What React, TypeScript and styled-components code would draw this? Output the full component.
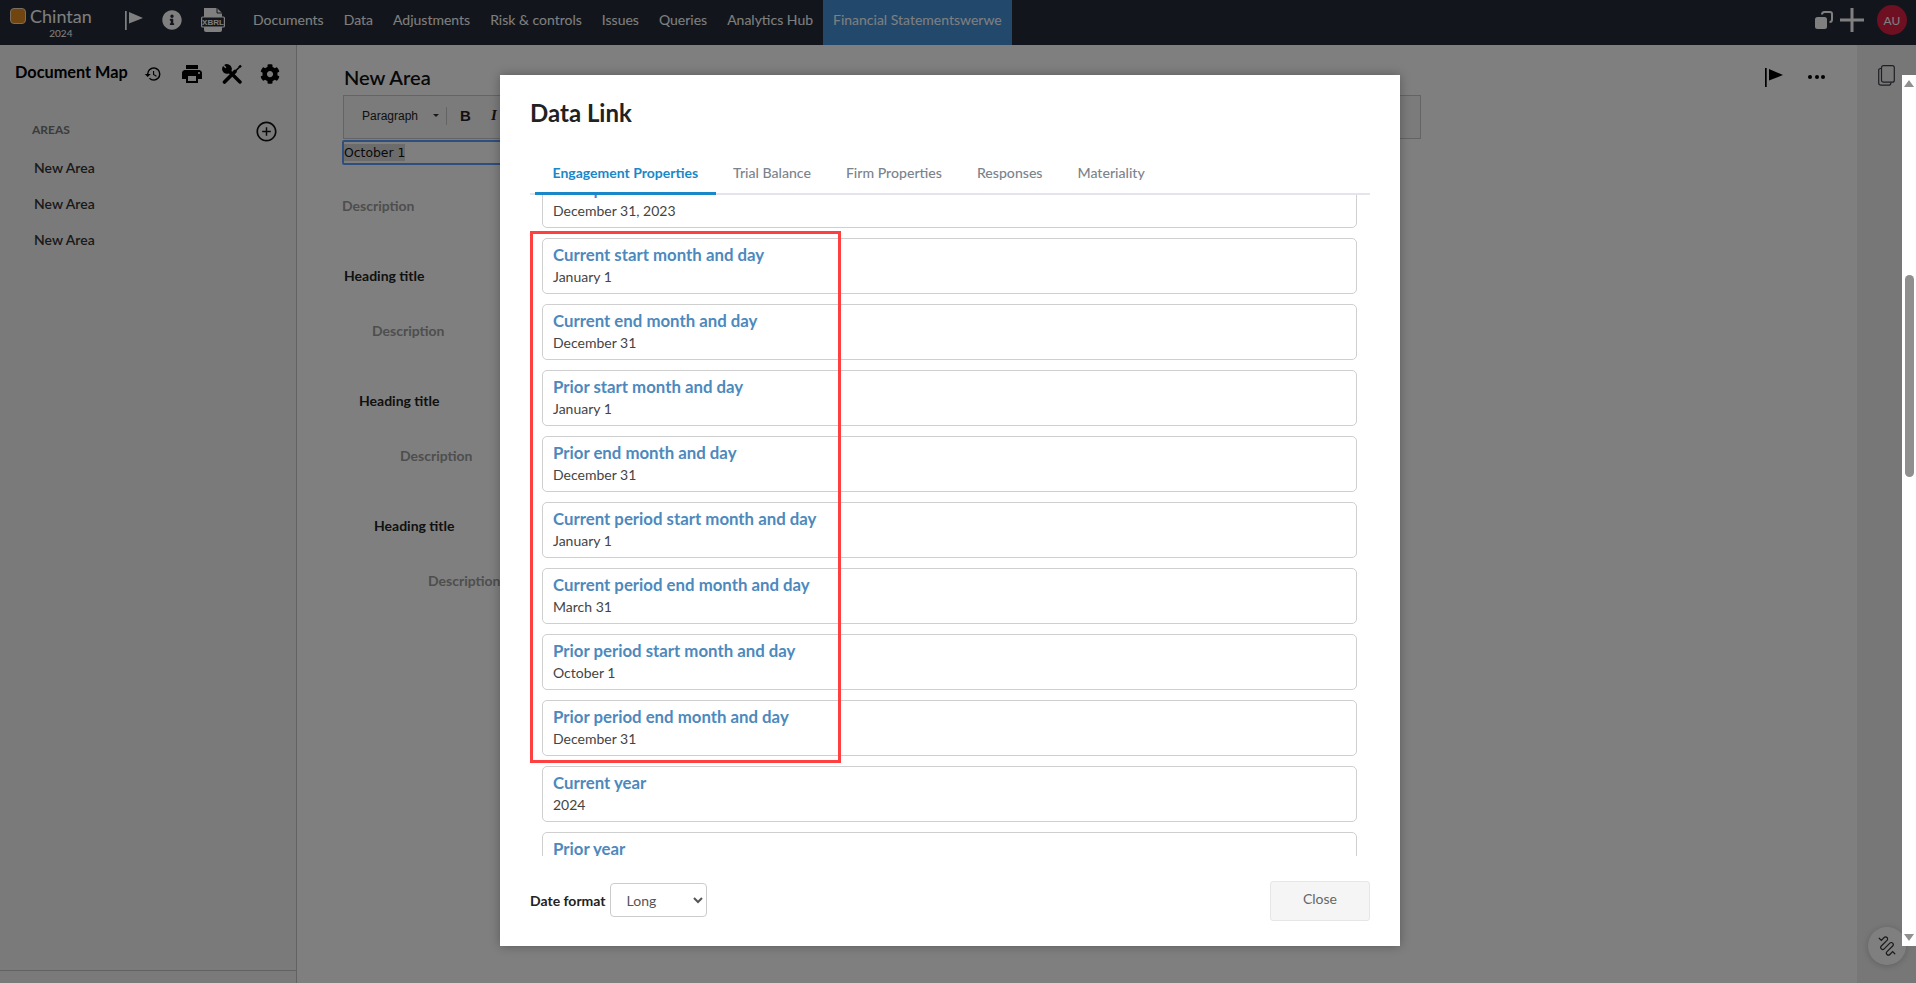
import React from "react";
import styled, { createGlobalStyle } from "styled-components";
import { FaCog, FaInfoCircle } from "react-icons/fa";
import { MdHistory, MdLocalPrintshop } from "react-icons/md";
import { AiOutlinePlusCircle } from "react-icons/ai";

const navItems = [
  "Documents",
  "Data",
  "Adjustments",
  "Risk & controls",
  "Issues",
  "Queries",
  "Analytics Hub",
];

const outline = [
  { kind: "desc", level: 0 },
  { kind: "heading", level: 0 },
  { kind: "desc", level: 1 },
  { kind: "heading", level: 1 },
  { kind: "desc", level: 2 },
  { kind: "heading", level: 2 },
  { kind: "desc", level: 3 },
];

const tabs = [
  "Engagement Properties",
  "Trial Balance",
  "Firm Properties",
  "Responses",
  "Materiality",
];

const properties = [
  ["Prior period end date", "December 31, 2023"],
  ["Current start month and day", "January 1"],
  ["Current end month and day", "December 31"],
  ["Prior start month and day", "January 1"],
  ["Prior end month and day", "December 31"],
  ["Current period start month and day", "January 1"],
  ["Current period end month and day", "March 31"],
  ["Prior period start month and day", "October 1"],
  ["Prior period end month and day", "December 31"],
  ["Current year", "2024"],
  ["Prior year", "2023"],
];

const FlagIcon = ({ color }: { color: string }) => (
  <svg width="18" height="19" viewBox="0 0 18 19">
    <rect x="0" y="0" width="1.7" height="19" fill={color} />
    <path d="M4 1 L18 7 L4 12.5 Z" fill={color} />
  </svg>
);

const XbrlIcon = () => (
  <svg width="24" height="24" viewBox="0 0 24 24">
    <path d="M3 0 H16 L21 5 V9 H3 Z" fill="#fff" />
    <path d="M16 0 V5 H21" fill="none" stroke="#242c38" strokeWidth="1" />
    <path d="M3 19 H21 V22 Q21 24 19 24 H5 Q3 24 3 22 Z" fill="#fff" />
    <rect x="0.6" y="9" width="22.8" height="10" rx="1" fill="#242c38" stroke="#fff" strokeWidth="1.2" />
    <text x="12" y="17" textAnchor="middle" fontSize="8" fontWeight="700" fontFamily="Liberation Sans, sans-serif" fill="#fff">
      XBRL
    </text>
  </svg>
);

const RestoreIcon = () => (
  <svg width="18" height="18" viewBox="0 0 18 18">
    <rect x="0" y="6" width="12" height="12" rx="2.5" fill="#fff" />
    <path d="M7 3.5 Q7 1 9.5 1 H15 Q17 1 17 3 V8.5 Q17 11 14.5 11" fill="none" stroke="#fff" strokeWidth="2" />
  </svg>
);

const PlusIcon = () => (
  <svg width="24" height="24" viewBox="0 0 24 24">
    <rect x="0" y="10.5" width="24" height="3" fill="#fff" />
    <rect x="10.5" y="0" width="3" height="24" fill="#fff" />
  </svg>
);

const CopyIcon = () => (
  <svg width="17" height="21" viewBox="0 0 17 21" fill="none" stroke="#3c3f46" strokeWidth="1.2">
    <rect x="3.5" y="0.7" width="12.8" height="16.5" rx="2" />
    <path d="M3.5 3.5 H2.6 Q0.7 3.5 0.7 5.5 V18 Q0.7 20.2 3 20.2 H10.5 Q13 20.2 13 17.4" />
  </svg>
);

const ToolsIcon = () => (
  <svg width="20" height="20" viewBox="0 0 20 20">
    <path d="M2.1 1.1 A4.85 4.85 0 1 1 1.1 2.1 L3.6 4.6 L4.6 3.6 Z" fill="#000" />
    <line x1="5" y1="5" x2="18" y2="18" stroke="#000" strokeWidth="3.4" strokeLinecap="round" />
    <line x1="2.5" y1="18" x2="13" y2="7.5" stroke="#000" strokeWidth="3.6" strokeLinecap="round" />
    <line x1="13" y1="7.5" x2="17" y2="3.5" stroke="#000" strokeWidth="1.6" />
    <line x1="17" y1="3.5" x2="19" y2="1.5" stroke="#000" strokeWidth="2.4" />
  </svg>
);

const SpringIcon = () => (
  <svg width="20" height="20" viewBox="0 0 20 20" fill="none" stroke="#333" strokeWidth="1.2" strokeLinecap="round">
    <g transform="rotate(45 10 10)">
      <path d="M-1 10 H2 V6 a2 2 0 0 1 4 0 V14 a2 2 0 0 0 4 0 V6 a2 2 0 0 1 4 0 V14 a2 2 0 0 0 4 0 V10 H21" />
    </g>
  </svg>
);

const App = () => (
  <Page>
    <GlobalStyle />
    <TopBar>
      <Brand>
        <LogoMark />
        <BrandText>
          <BrandName>Chintan</BrandName>
          <BrandYear>2024</BrandYear>
        </BrandText>
      </Brand>
      <TopIcons>
        <FlagIcon color="#fff" />
        <FaInfoCircle size={20} color="#fff" />
        <XbrlIcon />
      </TopIcons>
      <Nav>
        {navItems.map((item) => (
          <NavItem key={item}>{item}</NavItem>
        ))}
        <NavItem $active>Financial Statementswerwe</NavItem>
      </Nav>
      <TopRight>
        <RestoreIcon />
        <PlusIcon />
        <Avatar>AU</Avatar>
      </TopRight>
    </TopBar>

    <Main>
      <Sidebar>
        <SidebarHead>
          <SidebarTitle>Document Map</SidebarTitle>
          <SidebarTools>
            <MdHistory size={18} />
            <MdLocalPrintshop size={24} />
            <ToolsIcon />
            <FaCog size={20} />
          </SidebarTools>
        </SidebarHead>
        <AreasHead>
          <AreasLabel>AREAS</AreasLabel>
          <AiOutlinePlusCircle size={23} color="#111" />
        </AreasHead>
        <AreaList>
          <AreaItem>New Area</AreaItem>
          <AreaItem>New Area</AreaItem>
          <AreaItem>New Area</AreaItem>
        </AreaList>
        <SidebarFoot />
      </Sidebar>

      <Content>
        <TitleRow>
          <PageTitle>New Area</PageTitle>
          <TitleActions>
            <FlagIcon color="#000" />
            <Dots>
              <i />
              <i />
              <i />
            </Dots>
          </TitleActions>
        </TitleRow>
        <Toolbar>
          <FormatLabel>Paragraph</FormatLabel>
          <FormatCaret />
          <ToolDivider />
          <ToolBold>B</ToolBold>
          <ToolItalic>I</ToolItalic>
        </Toolbar>
        <Editor>
          <Selected>October 1</Selected>
        </Editor>
        <Outline>
          {outline.map((row, i) =>
            row.kind === "heading" ? (
              <HeadingRow key={i} $level={row.level}>
                Heading title
              </HeadingRow>
            ) : (
              <DescRow key={i} $level={row.level}>
                Description
              </DescRow>
            )
          )}
        </Outline>
      </Content>

      <RightRail>
        <CopyIcon />
      </RightRail>
      <Fab>
        <SpringIcon />
      </Fab>
    </Main>

    <Backdrop>
      <Modal>
        <ModalTitle>Data Link</ModalTitle>
        <TabBar>
          {tabs.map((tab, i) => (
            <Tab key={tab} $active={i === 0}>
              {tab}
            </Tab>
          ))}
        </TabBar>
        <PropertyList>
          {properties.map(([name, value]) => (
            <PropertyCard key={name}>
              <PropertyName>{name}</PropertyName>
              <PropertyValue>{value}</PropertyValue>
            </PropertyCard>
          ))}
        </PropertyList>
        <ModalFooter>
          <FormatField>
            <FieldLabel>Date format</FieldLabel>
            <FormatSelect defaultValue="Long">
              <option>Long</option>
              <option>Short</option>
            </FormatSelect>
          </FormatField>
          <CloseButton>Close</CloseButton>
        </ModalFooter>
        <Highlight />
      </Modal>
      <ScrollTrack>
        <ScrollArrow />
        <ScrollThumb />
        <ScrollArrow $down />
      </ScrollTrack>
    </Backdrop>
  </Page>
);

export default App;

const GlobalStyle = createGlobalStyle`
  html, body {
    margin: 0;
    padding: 0;
    height: 100%;
    overflow: hidden;
  }
  body {
    font-family: Lato, "Liberation Sans", sans-serif;
    font-size: 14px;
  }
  * {
    box-sizing: border-box;
  }
`;

const Page = styled.div`
  position: relative;
  width: 100%;
  height: 100vh;
  display: flex;
  flex-direction: column;
  background: #fff;
  overflow: hidden;
`;

const TopBar = styled.header`
  height: 45px;
  flex: none;
  display: flex;
  align-items: stretch;
  background: #242c38;
  color: #fff;
`;

const Brand = styled.div`
  width: 125px;
  flex: none;
  display: flex;
  padding: 8px 0 0 10px;
  gap: 4px;
`;

const LogoMark = styled.div`
  width: 16px;
  height: 16px;
  border-radius: 4px;
  background: #e08a1e;
  border: 1.5px solid #f4dcc0;
`;

const BrandText = styled.div`
  display: flex;
  flex-direction: column;
  align-items: center;
`;

const BrandName = styled.div`
  font-size: 18px;
  line-height: 16px;
`;

const BrandYear = styled.div`
  font-size: 10px;
  line-height: 12px;
  margin-top: 3px;
`;

const TopIcons = styled.div`
  width: 118px;
  flex: none;
  display: flex;
  align-items: center;
  gap: 19px;
  padding-bottom: 5px;
`;

const Nav = styled.nav`
  display: flex;
  align-items: stretch;
`;

const NavItem = styled.a<{ $active?: boolean }>`
  display: flex;
  align-items: center;
  padding: 0 10px 6px;
  font-size: 14px;
  color: #fff;
  white-space: nowrap;
  background: ${(p) => (p.$active ? "#4490d6" : "transparent")};
`;

const TopRight = styled.div`
  margin-left: auto;
  display: flex;
  align-items: center;
  gap: 7px;
  padding: 0 9px 5px 0;
`;

const Avatar = styled.div`
  width: 30px;
  height: 30px;
  margin-left: 6px;
  border-radius: 50%;
  background: #de1e44;
  color: #fff;
  font-size: 12px;
  display: flex;
  align-items: center;
  justify-content: center;
`;

const Main = styled.main`
  position: relative;
  flex: 1;
  display: flex;
  min-height: 0;
`;

const Sidebar = styled.aside`
  width: 297px;
  flex: none;
  display: flex;
  flex-direction: column;
  background: #f4f4f4;
  border-right: 1px solid #c4c4c4;
`;

const SidebarHead = styled.div`
  display: flex;
  align-items: center;
  padding: 5px 16px 0 15px;
  height: 47px;
`;

const SidebarTitle = styled.div`
  font-size: 16.3px;
  font-weight: 700;
  color: #000;
  white-space: nowrap;
`;

const SidebarTools = styled.div`
  margin-left: auto;
  display: flex;
  align-items: center;
  gap: 18px;
  color: #000;
  margin-top: 6px;
`;

const AreasHead = styled.div`
  display: flex;
  align-items: center;
  justify-content: space-between;
  padding: 0 18px 0 32px;
  margin-top: 27px;
  height: 24px;
`;

const AreasLabel = styled.div`
  font-size: 12px;
  font-weight: 700;
  color: #777;
  padding-bottom: 4px;
`;

const AreaList = styled.div`
  display: flex;
  flex-direction: column;
  gap: 16px;
  padding: 15px 0 0 34px;
`;

const AreaItem = styled.div`
  font-size: 14px;
  line-height: 20px;
  color: #333;
  font-weight: 600;
`;

const SidebarFoot = styled.div`
  margin-top: auto;
  height: 13px;
  border-top: 1px solid #c4c4c4;
`;

const Content = styled.section`
  flex: 1;
  min-width: 0;
  padding: 0 0 0 45px;
`;

const TitleRow = styled.div`
  display: flex;
  align-items: center;
  justify-content: space-between;
  height: 50px;
  padding: 14px 32px 0 2px;
`;

const PageTitle = styled.h1`
  margin: 0;
  font-size: 20px;
  font-weight: 600;
  color: #111;
`;

const TitleActions = styled.div`
  display: flex;
  align-items: center;
  gap: 25px;
`;

const Dots = styled.div`
  display: flex;
  gap: 2.5px;

  i {
    width: 4px;
    height: 4px;
    border-radius: 50%;
    background: #000;
  }
`;

const Toolbar = styled.div`
  width: 1078px;
  height: 44px;
  margin-left: 1px;
  display: flex;
  align-items: center;
  padding: 0 0 3px 18px;
  background: #f6f6f6;
  border: 1px solid #c8c8c8;
`;

const FormatLabel = styled.span`
  font-family: "Liberation Sans", sans-serif;
  font-size: 12px;
  color: #222;
`;

const FormatCaret = styled.span`
  margin-left: 15px;
  border-left: 3px solid transparent;
  border-right: 3px solid transparent;
  border-top: 3px solid #333;
`;

const ToolDivider = styled.span`
  width: 1px;
  height: 18px;
  margin-left: 7px;
  background: #c8c8c8;
`;

const ToolBold = styled.span`
  margin-left: 13px;
  font-family: "Liberation Sans", sans-serif;
  font-size: 15px;
  font-weight: 700;
  color: #222;
`;

const ToolItalic = styled.span`
  margin-left: 20px;
  font-family: "Liberation Serif", serif;
  font-size: 15px;
  font-weight: 700;
  font-style: italic;
  color: #222;
`;

const Editor = styled.div`
  width: 900px;
  height: 25px;
  margin-top: 1px;
  display: flex;
  align-items: center;
  border: 2px solid #5b9dff;
  border-radius: 2px;
  font-family: "DejaVu Sans", sans-serif;
  font-size: 12.4px;
  color: #111;
`;

const Selected = styled.span`
  background: #d8d8d8;
  line-height: 17px;
`;

const Outline = styled.div`
  display: flex;
  flex-direction: column;
  padding-top: 31px;
`;

const HeadingRow = styled.div<{ $level: number }>`
  margin: 50px 0 0 ${(p) => 2 + p.$level * 15}px;
  line-height: 20px;
  font-size: 14px;
  font-weight: 700;
  color: #222;
`;

const DescRow = styled.div<{ $level: number }>`
  margin: ${(p) => (p.$level === 0 ? 0 : 35)}px 0 0 ${(p) => (p.$level === 0 ? 0 : 2 + p.$level * 28)}px;
  line-height: 20px;
  font-size: 14px;
  font-weight: 700;
  color: #9c9c9c;
`;

const RightRail = styled.aside`
  width: 59px;
  flex: none;
  display: flex;
  justify-content: center;
  padding-top: 20px;
  background: #eeeef0;
`;

const Fab = styled.button`
  position: absolute;
  right: 10px;
  bottom: 18px;
  width: 38px;
  height: 38px;
  padding: 0;
  display: flex;
  align-items: center;
  justify-content: center;
  border: 0;
  border-radius: 50%;
  background: #fff;
  box-shadow: 0 1px 6px rgba(0, 0, 0, 0.2);
`;

const Backdrop = styled.div`
  position: absolute;
  inset: 0;
  display: flex;
  justify-content: center;
  align-items: flex-start;
  padding: 75px 16px 0 0;
  background: rgba(0, 0, 0, 0.5);
`;

const Modal = styled.div`
  position: relative;
  width: 900px;
  height: 871px;
  display: flex;
  flex-direction: column;
  padding: 0 30px;
  background: #fff;
  box-shadow: 0 0 10px rgba(0, 0, 0, 0.3);
`;

const ModalTitle = styled.h2`
  margin: 0;
  height: 85px;
  padding-top: 22px;
  font-size: 24px;
  line-height: 32px;
  font-weight: 700;
  color: #222;
`;

const TabBar = styled.div`
  flex: none;
  height: 35px;
  display: flex;
  padding-left: 5px;
  border-bottom: 2px solid #e4e4ec;
`;

const Tab = styled.div<{ $active?: boolean }>`
  height: 35px;
  padding: 0 17.5px 7px;
  display: flex;
  align-items: center;
  font-size: ${(p) => (p.$active ? 14 : 14.1)}px;
  font-weight: ${(p) => (p.$active ? 700 : 500)};
  color: ${(p) => (p.$active ? "#1a87c9" : "#7b838c")};
  border-bottom: 3px solid ${(p) => (p.$active ? "#1a87c9" : "transparent")};
  white-space: nowrap;
`;

const PropertyList = styled.div`
  flex: 1;
  min-height: 0;
  overflow: hidden;
  padding: 0 13px 0 12px;
  display: flex;
  flex-direction: column;
  gap: 10px;

  & > :first-child {
    margin-top: -23px;
  }
`;

const PropertyCard = styled.div`
  flex: none;
  height: 56px;
  padding: 5px 10px 0;
  border: 1px solid #cfcfcf;
  border-radius: 5px;
`;

const PropertyName = styled.div`
  font-size: 16.8px;
  line-height: 22px;
  font-weight: 700;
  color: #4c89bd;
`;

const PropertyValue = styled.div`
  font-size: 14px;
  line-height: 22px;
  color: #444;
`;

const ModalFooter = styled.div`
  flex: none;
  height: 90px;
  display: flex;
  align-items: center;
  justify-content: space-between;
`;

const FormatField = styled.label`
  display: flex;
  align-items: center;
  gap: 4px;
  margin-bottom: 2px;
`;

const FieldLabel = styled.span`
  font-size: 14px;
  font-weight: 700;
  color: #222;
`;

const FormatSelect = styled.select`
  width: 97px;
  height: 34px;
  padding-left: 12px;
  background: #fff;
  border: 1px solid #ccc;
  border-radius: 4px;
  font-family: Lato, sans-serif;
  font-size: 14px;
  color: #555;
`;

const CloseButton = styled.button`
  width: 100px;
  height: 40px;
  padding: 0 0 5px;
  background: #f5f5f5;
  border: 1px solid #e6e6e6;
  border-radius: 3px;
  font-family: Lato, sans-serif;
  font-size: 14px;
  color: #666;
`;

const Highlight = styled.div`
  position: absolute;
  left: 30px;
  top: 156px;
  width: 311px;
  height: 532px;
  border: 3px solid #ff4040;
  pointer-events: none;
`;

const ScrollTrack = styled.div`
  position: absolute;
  top: 75px;
  right: 0;
  width: 14px;
  height: 871px;
  display: flex;
  flex-direction: column;
  align-items: center;
  background: #fff;
`;

const ScrollArrow = styled.div<{ $down?: boolean }>`
  position: absolute;
  ${(p) => (p.$down ? "bottom: 5px;" : "top: 5px;")}
  border-left: 5px solid transparent;
  border-right: 5px solid transparent;
  ${(p) => (p.$down ? "border-top: 7px solid #909090;" : "border-bottom: 7px solid #909090;")}
`;

const ScrollThumb = styled.div`
  width: 9px;
  height: 202px;
  margin-top: 200px;
  border-radius: 5px;
  background: #8f8f8f;
`;
